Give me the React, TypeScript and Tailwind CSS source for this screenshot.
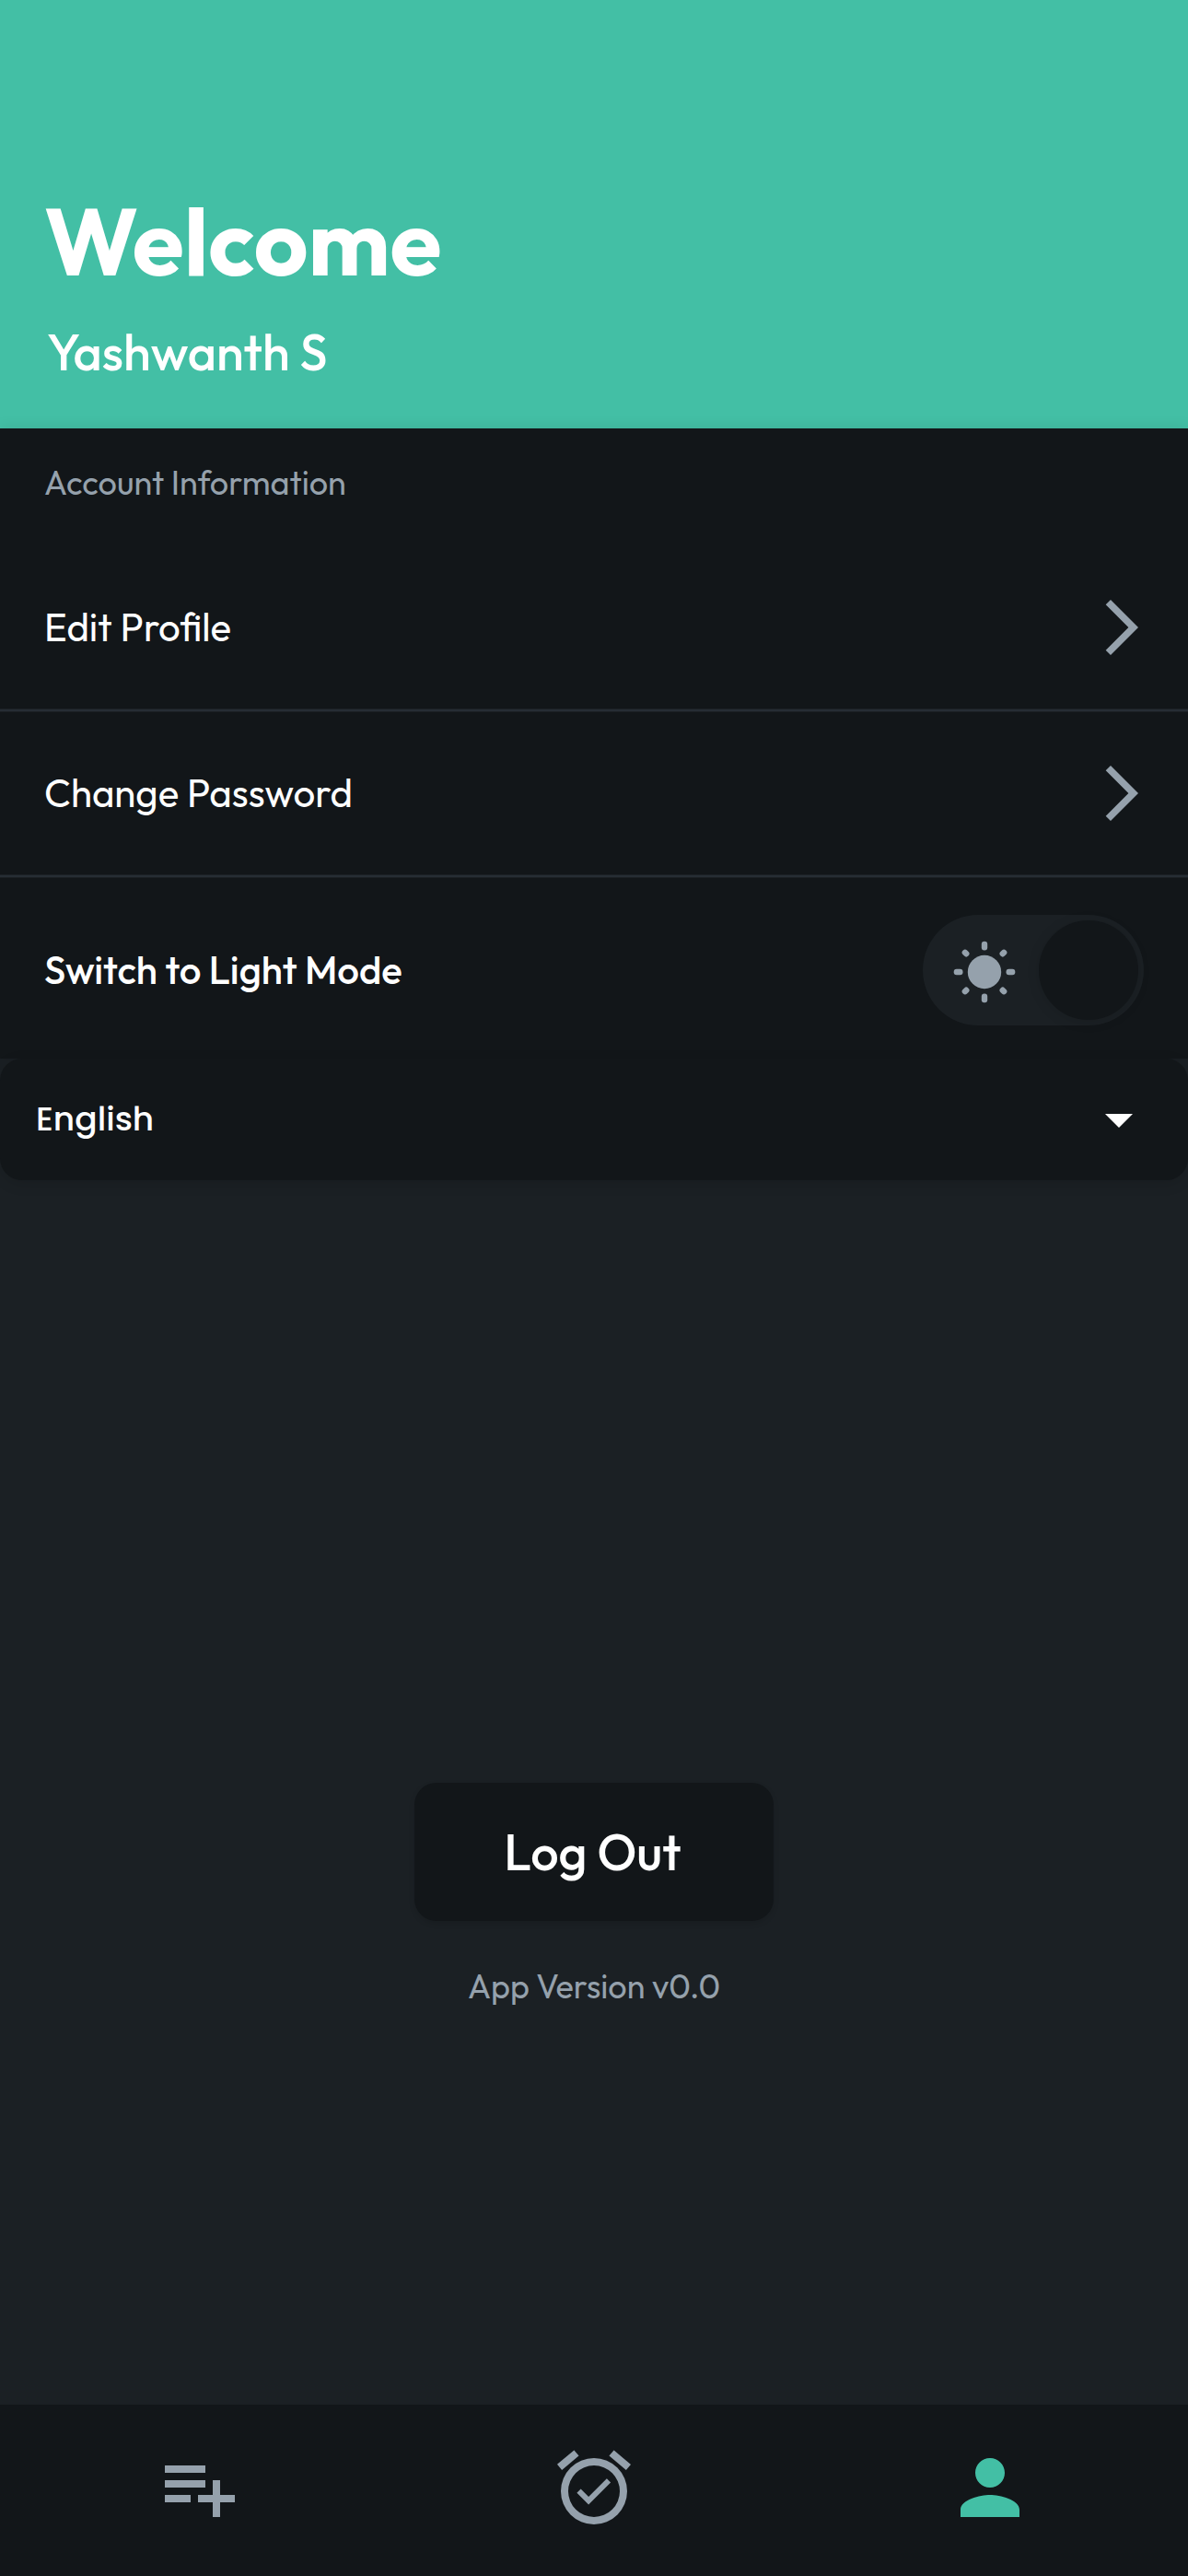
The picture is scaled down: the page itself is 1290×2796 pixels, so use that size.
import type { ReactNode } from "react";

function Chevron() {
  return (
    <svg viewBox="0 0 24 24" className="size-[72px] fill-[#95a1ac]">
      <path d="M6.23 20.23L8 22l10-10L8 2 6.23 3.77 14.46 12z" />
    </svg>
  );
}

function Sun() {
  return (
    <svg viewBox="-34 -34 68 68" className="mt-[3px] ml-[33px] size-[68px] fill-[#95a1ac]">
      <circle r="18.2" />
      {[0, 90, 180, 270].map((a) => (
        <rect key={a} x="-3.2" y="-33.3" width="6.4" height="9.8" rx="3" transform={`rotate(${a})`} />
      ))}
      {[45, 135, 225, 315].map((a) => (
        <rect key={a} x="-3.2" y="-33" width="6.4" height="8.2" rx="3" transform={`rotate(${a})`} />
      ))}
    </svg>
  );
}

function Divider() {
  return <div className="h-1 border-y border-[#1b2024] bg-[#262d34]" />;
}

function LinkRow({ children }: { children: ReactNode }) {
  return (
    <div className="flex h-[176px] items-center justify-between pr-9 pl-12 text-[42px]">
      <span>{children}</span>
      <Chevron />
    </div>
  );
}

function NavItem({ d, active = false }: { d: string; active?: boolean }) {
  return (
    <div className="flex flex-1 justify-center">
      <svg viewBox="0 0 24 24" className={active ? "size-24 fill-[#43bfa5]" : "size-24 fill-[#95a1ac]"}>
        <path d={d} />
      </svg>
    </div>
  );
}

export default function App() {
  return (
    <div className="flex h-[2796px] w-[1290px] flex-col overflow-hidden bg-[#1b2024] font-['Outfit','Lato',sans-serif] leading-[1.26] text-white">
      <header className="h-[465px] shrink-0 bg-[#43bfa5] pt-[198px] pl-12">
        <h1 className="text-[102px] leading-[128px] font-bold">Welcome</h1>
        <p className="mt-[22px] pl-[3px] text-[54px] font-medium">Yashwanth S</p>
      </header>

      <section className="shrink-0 bg-[#121619] shadow-[0_0_15px_rgba(0,0,0,0.1)]">
        <div className="h-32 pt-9 pl-12 text-4xl leading-[45px] text-[#95a1ac]">Account Information</div>
        <LinkRow>Edit Profile</LinkRow>
        <Divider />
        <LinkRow>Change Password</LinkRow>
        <Divider />
        <div className="flex h-[196px] justify-between px-12 pt-10">
          <span className="pt-[34px] text-[42px] font-medium">Switch to Light Mode</span>
          <div className="flex h-[120px] w-60 items-center justify-between rounded-full bg-[#1b2024] pr-1.5">
            <Sun />
            <div className="size-[108px] rounded-full bg-[#121619] shadow-[0_2px_14px_rgba(0,0,0,0.12)]" />
          </div>
        </div>
      </section>

      <div className="flex h-[132px] shrink-0 items-center justify-between rounded-3xl bg-[#121619] pr-[39px] pl-[39px] shadow-[0_4px_15px_rgba(0,0,0,0.12)]">
        <span className="font-['Poppins','Inter',sans-serif] text-4xl leading-[54px] font-medium">English</span>
        <svg viewBox="0 0 24 24" className="size-[72px] fill-white">
          <path d="M7 10l5 5 5-5z" />
        </svg>
      </div>

      <main className="flex flex-1 flex-col items-center pt-[654px]">
        <button className="h-[150px] w-[390px] rounded-3xl bg-[#121619] pr-[3px] text-[54px] font-medium shadow-[0_3px_6px_rgba(0,0,0,0.12)]">
          Log Out
        </button>
        <p className="mt-12 text-4xl leading-[45px] text-[#95a1ac]">App Version v0.0</p>
      </main>

      <nav className="flex h-[186px] shrink-0 bg-[#121619] pt-[42px]">
        <NavItem d="M14 10H3v2h11v-2zm0-4H3v2h11V6zm4 8v-4h-2v4h-4v2h4v4h2v-4h4v-2h-4zM3 16h7v-2H3v2z" />
        <NavItem d="M10.54 14.53L8.41 12.4l-1.06 1.06 3.18 3.18 6-6-1.06-1.06-4.93 4.95zM22 5.72l-4.6-3.86-1.29 1.53 4.6 3.86L22 5.72zM7.88 3.39L6.6 1.86 2 5.71l1.29 1.53 4.59-3.85zM12 4a9 9 0 1 0 0 18 9 9 0 0 0 0-18zm0 16a7 7 0 1 1 0-14 7 7 0 0 1 0 14z" />
        <NavItem active d="M12 12c2.21 0 4-1.79 4-4s-1.79-4-4-4-4 1.79-4 4 1.79 4 4 4zm0 2c-2.67 0-8 1.34-8 4v2h16v-2c0-2.66-5.33-4-8-4z" />
      </nav>
    </div>
  );
}
